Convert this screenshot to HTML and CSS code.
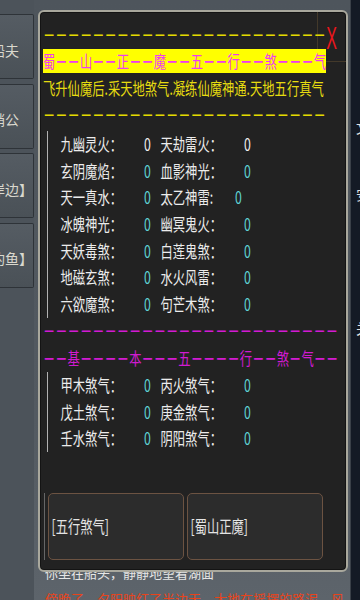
FILE: index.html
```html
<!DOCTYPE html>
<html lang="zh-CN">
<head>
<meta charset="utf-8">
<title>五行煞气</title>
<link rel="stylesheet" href="styles.css">
</head>
<body>
<div class="screen">
  <nav class="sidebar">
    <div class="side-btn"><span>船夫</span></div>
    <div class="side-btn"><span>艄公</span></div>
    <div class="side-btn side-btn--br"><span>岸边】</span></div>
    <div class="side-btn side-btn--br"><span>钓鱼】</span></div>
  </nav>
  <main class="scene">
    <p class="scene-line">你坐在船头，静静地望着湖面</p>
    <p class="scene-line scene-line--red">傍晚了，夕阳映红了半边天，大地在摇摆的路泥，风</p>
  </main>
  <aside class="rightbar"><p>文<br>安<br>　<br>关</p></aside>

  <section class="modal">
    <button class="close"><span>X</span></button>

    <div class="rule rule--yellow">－－－－－－－－－－－－－－－－－－－－－－－</div>
    <div class="title"><span class="tall">蜀<span class="d">－－</span>山<span class="d">－－</span>正<span class="d">－－</span>魔<span class="d">－－</span>五<span class="d">－－</span>行<span class="d">－－</span>煞<span class="d">－－－</span>气</span></div>
    <div class="sub">飞升仙魔后.采天地煞气.凝练仙魔神通.天地五行真气</div>
    <div class="rule rule--yellow">－－－－－－－－－－－－－－－－－－－－－－－</div>

    <div class="list list--main">
      <div class="row"><span>九幽灵火：<b class="v v--w">0</b></span><span>天劫雷火：<b class="v v--w">0</b></span></div>
      <div class="row"><span>玄阴魔焰：<b class="v">0</b></span><span>血影神光：<b class="v">0</b></span></div>
      <div class="row"><span>天一真水：<b class="v">0</b></span><span>太乙神雷:<b class="v">0</b></span></div>
      <div class="row"><span>冰魄神光：<b class="v">0</b></span><span>幽冥鬼火：<b class="v">0</b></span></div>
      <div class="row"><span>天妖毒煞：<b class="v">0</b></span><span>白莲鬼煞：<b class="v">0</b></span></div>
      <div class="row"><span>地磁玄煞：<b class="v">0</b></span><span>水火风雷：<b class="v">0</b></span></div>
      <div class="row"><span>六欲魔煞：<b class="v">0</b></span><span>句芒木煞：<b class="v">0</b></span></div>
    </div>

    <div class="rule rule--magenta">－－－－－－－－－－－－－－－－－－－－－－－－</div>
    <div class="mtitle"><span class="d">－－</span>基<span class="d">－－－－</span>本<span class="d">－－－</span>五<span class="d">－－－－</span>行<span class="d">－－</span>煞<span class="d">－</span>气<span class="d">－－</span></div>

    <div class="list list--basic">
      <div class="row"><span>甲木煞气：<b class="v">0</b></span><span>丙火煞气：<b class="v">0</b></span></div>
      <div class="row"><span>戊土煞气：<b class="v">0</b></span><span>庚金煞气：<b class="v">0</b></span></div>
      <div class="row"><span>壬水煞气：<b class="v">0</b></span><span>阴阳煞气：<b class="v">0</b></span></div>
    </div>

    <div class="btns">
      <button class="btn"><span class="tall">[五行煞气]</span></button>
      <button class="btn"><span class="tall">[蜀山正魔]</span></button>
    </div>
  </section>
</div>
</body>
</html>
```

FILE: styles.css
```css
* { box-sizing: border-box; }

body {
  margin: 0;
  background: #50575e;
  font-family: "Noto Sans CJK SC", "Noto Sans", sans-serif;
}

.screen {
  position: relative;
  width: 360px;
  height: 600px;
  display: flex;
  overflow: hidden;
}

/* ---------- background page ---------- */
.sidebar {
  width: 34px;
  flex: none;
  padding-top: 14px;
  display: flex;
  flex-direction: column;
  gap: 4.5px;
  background: #4c535a;
}

.side-btn {
  height: 65px;
  border: 1px solid #2e3338;
  border-left: 0;
  border-radius: 0 2px 2px 0;
  background: linear-gradient(180deg, #555c63, #4a5157);
  color: #dad8ce;
  font-size: 14px;
  display: flex;
  align-items: center;
  justify-content: flex-end;
  padding: 6px 14px 0 0;
  overflow: hidden;
  white-space: nowrap;
}

.side-btn--br { padding-right: 0; }

.scene {
  flex: 1;
  background: linear-gradient(180deg, #4e555c 0%, #535a61 70%, #5d646b 100%);
  display: flex;
  flex-direction: column;
  justify-content: flex-end;
  padding-left: 11px;
}

.scene-line {
  margin: 0;
  font-size: 13px;
  line-height: 26px;
  white-space: nowrap;
  color: #e6e6e6;
}

.scene-line--red {
  color: #e8441c;
  margin-bottom: -12px;
}

.rightbar {
  width: 10px;
  flex: none;
  background: #141a25;
  overflow: hidden;
  padding-left: 5px;
  border-left: 1px solid #3a4048;
}

.rightbar p {
  margin: 0;
  padding-top: 94px;
  font-size: 14px;
  line-height: 67px;
  color: #e2e2e2;
  white-space: nowrap;
}

/* ---------- modal ---------- */
.modal {
  position: absolute;
  left: 38px;
  top: 10px;
  width: 310px;
  height: 562px;
  border: 2px solid #a9a89d;
  border-radius: 6px;
  background: #222222;
  box-shadow: inset 0 0 0 1px #141414;
  padding: 11px 0 0 3px;
  font-size: 12.3px;
}

.close {
  position: absolute;
  top: 0;
  right: 0;
  width: 29px;
  height: 50px;
  padding: 10px 0 0;
  margin: 0;
  background: transparent;
  border: 0;
  border-left: 1px solid #43392a;
  border-bottom: 1px solid #43392a;
  display: flex;
  align-items: flex-start;
  justify-content: center;
}

.close span {
  display: inline-block;
  font-family: "Liberation Sans", sans-serif;
  font-size: 32px;
  line-height: 32px;
  color: #e8161c;
  transform: scaleX(0.5);
}

.tall {
  display: inline-block;
  transform: scaleY(1.4);
}

.d { font-weight: 700; }

.rule {
  height: 22px;
  line-height: 22px;
  font-weight: 700;
  white-space: nowrap;
  overflow: hidden;
  transform: scaleY(1.3);
}

.rule--yellow { color: #e4da00; }
.rule--magenta { color: #d21ad2; margin-top: 1px; }

.title {
  position: relative;
  z-index: 1;
  width: max-content;
  height: 24px;
  margin-top: 4px;
  display: flex;
  align-items: center;
  background: #ffff00;
  color: #f03cf0;
  white-space: nowrap;
}

.sub {
  height: 31px;
  line-height: 31px;
  color: #e6dc10;
  white-space: nowrap;
  transform: scaleY(1.4);
}

.list {
  margin-left: 4px;
  border-left: 1.5px solid #b2b2b2;
  padding-left: 12.5px;
  color: #ececec;
}

.list--main { margin-top: 5px; }
.list--basic { margin-top: 3px; }

.row {
  height: 26.7px;
  line-height: 26.7px;
  display: grid;
  grid-template-columns: 100px 1fr;
  white-space: nowrap;
  transform: scaleY(1.4);
}

.v {
  font-weight: 400;
  margin-left: 22px;
  color: #5fd3d3;
}

.v--w { color: #f0f0f0; }

.mtitle {
  height: 22px;
  line-height: 22px;
  margin-top: 6px;
  color: #d21ad2;
  white-space: nowrap;
  transform: scaleY(1.4);
}

.btns {
  margin-top: 41px;
  margin-left: 1px;
  padding-left: 2.5px;
  border-left: 1.5px solid #666666;
  display: flex;
  gap: 3px;
}

.btn {
  width: 136px;
  height: 67px;
  margin: 0;
  padding: 0 0 0 3px;
  border: 1.5px solid #6c5342;
  border-radius: 5px;
  background: #2c2c2c;
  color: #e4e4e4;
  font-family: inherit;
  font-size: 12.3px;
  display: flex;
  align-items: center;
  justify-content: flex-start;
}
```
